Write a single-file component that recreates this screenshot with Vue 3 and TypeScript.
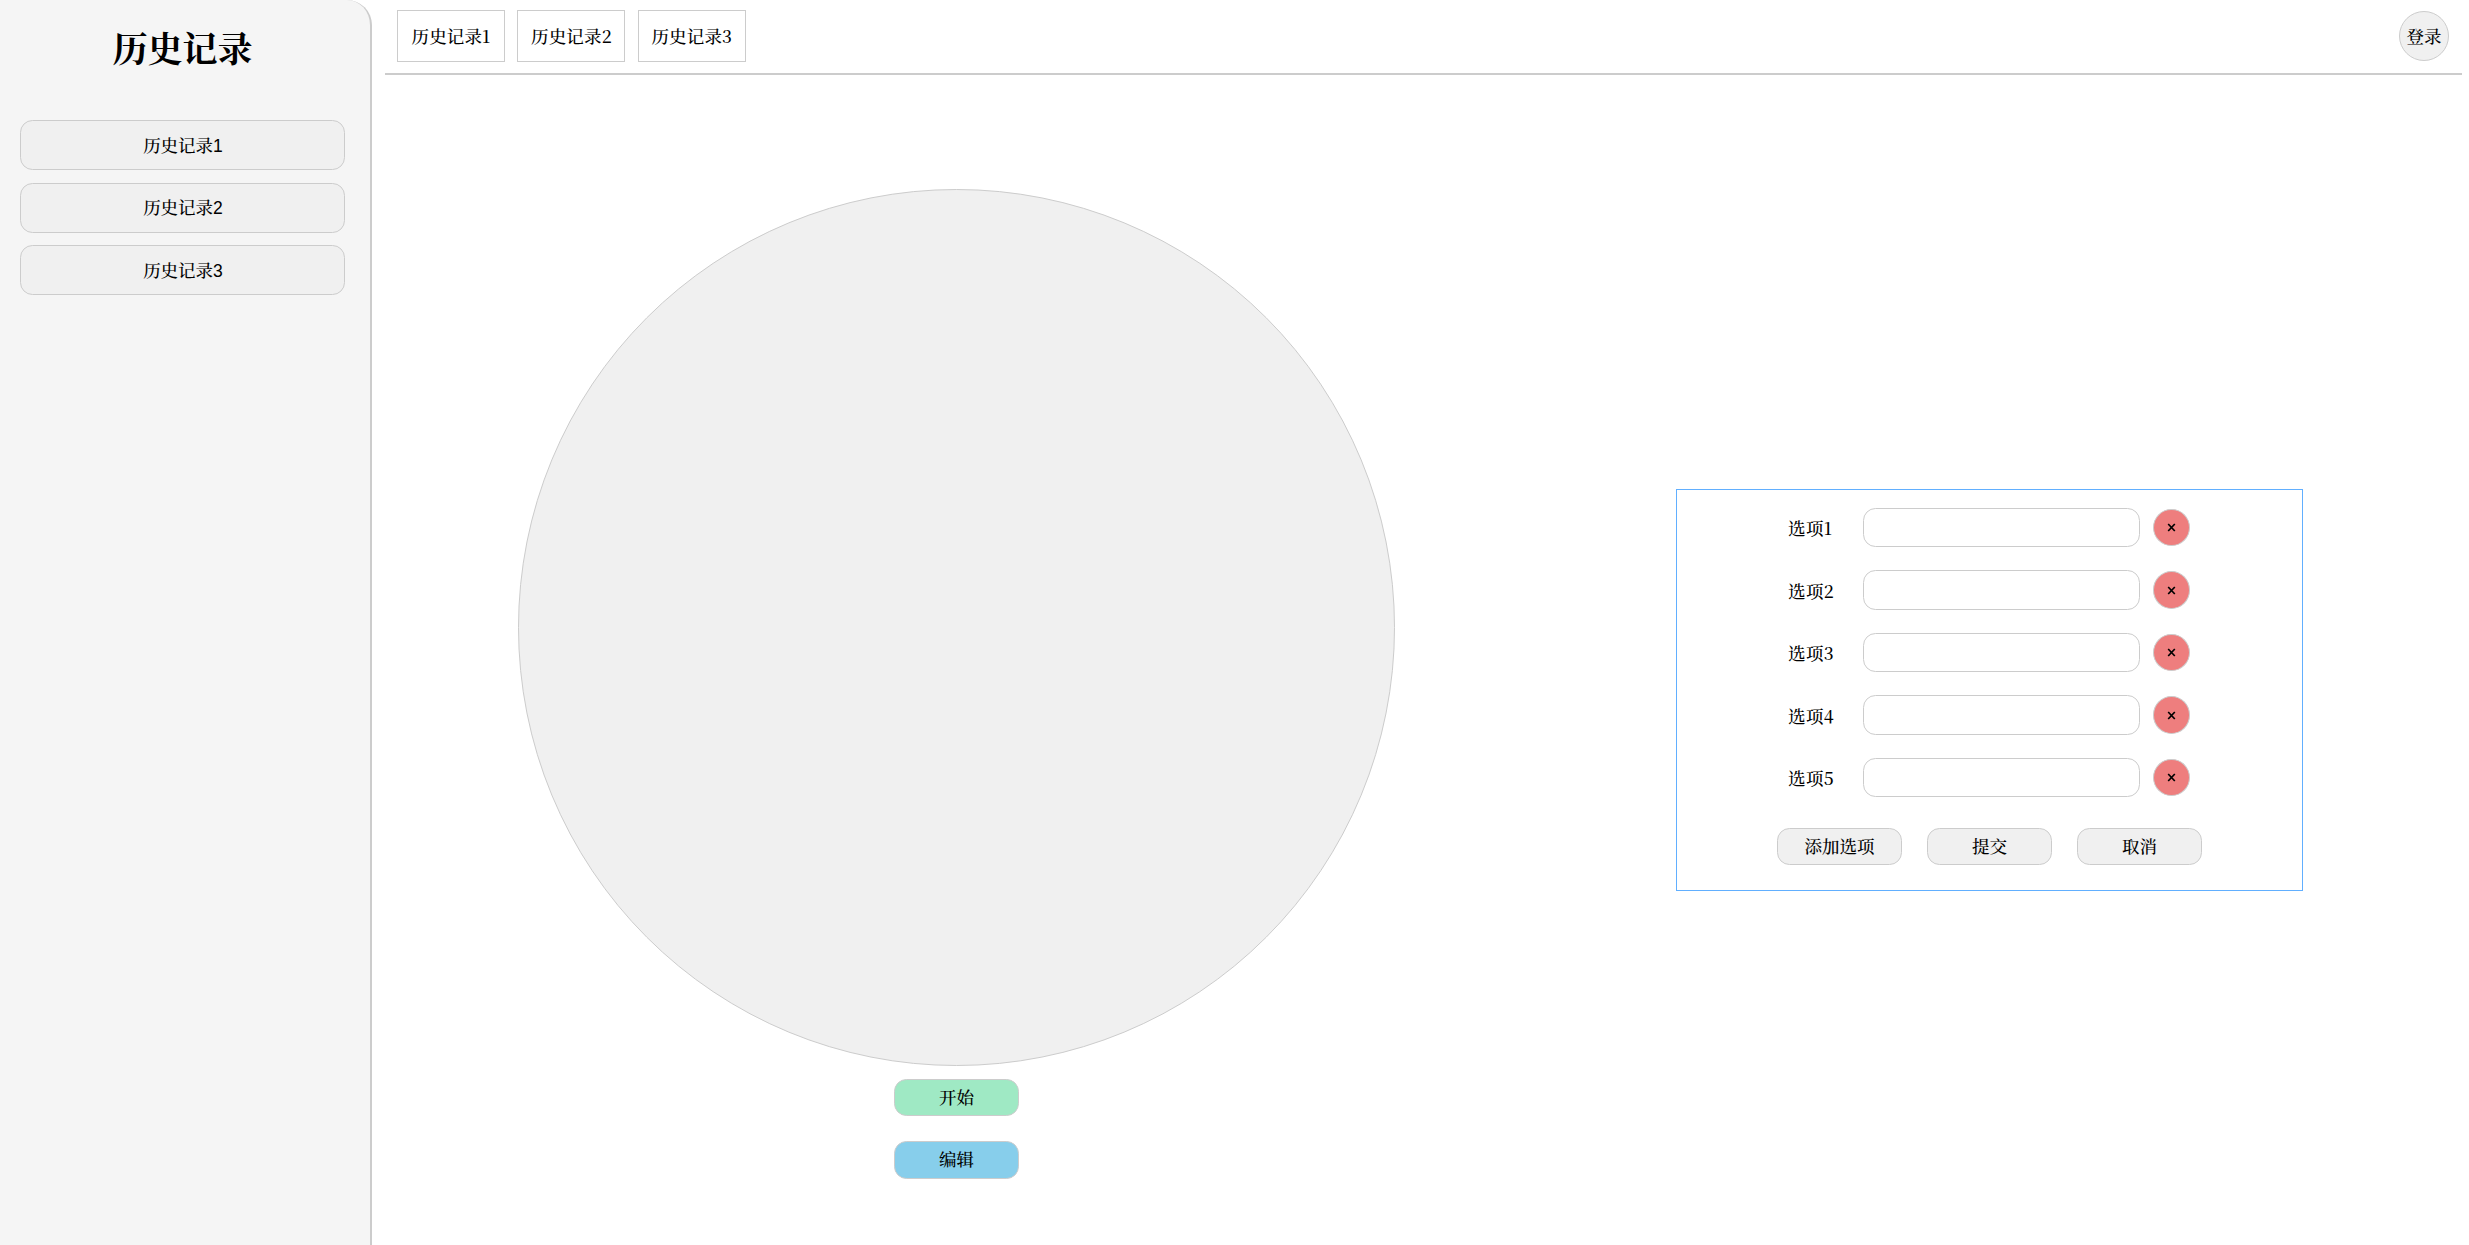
<script setup lang="ts">
import { ref } from 'vue'

const records = ref<string[]>(['历史记录1', '历史记录2', '历史记录3'])
const options = ref<{ id: number; value: string }[]>(
  [1, 2, 3, 4, 5].map((id) => ({ id, value: '' })),
)

function addOption() {
  options.value.push({ id: options.value.length + 1, value: '' })
}

function removeOption(index: number) {
  options.value.splice(index, 1)
}
</script>

<template>
  <div class="page">
    <aside class="sidebar">
      <h1 class="title">历史记录</h1>
      <button v-for="record in records" :key="record" class="btn record">{{ record }}</button>
    </aside>
    <div class="content">
      <header class="topbar">
        <nav class="tabs">
          <div v-for="record in records" :key="record" class="tab">{{ record }}</div>
        </nav>
        <button class="btn login">登录</button>
      </header>
      <main class="main">
        <section class="wheel-area">
          <div class="wheel"></div>
          <button class="btn action start">开始</button>
          <button class="btn action edit">编辑</button>
        </section>
        <section class="panel">
          <div v-for="(option, index) in options" :key="option.id" class="option">
            <span class="label">选项{{ index + 1 }}</span>
            <input v-model="option.value" class="field" type="text" />
            <button class="btn remove" @click="removeOption(index)">
              <svg width="9" height="9" viewBox="0 0 9 9">
                <path d="M1.2 1 L7.8 8 M7.8 1 L1.2 8" stroke="#000" stroke-width="1.7" />
              </svg>
            </button>
          </div>
          <div class="panel-actions">
            <button class="btn action" @click="addOption">添加选项</button>
            <button class="btn action">提交</button>
            <button class="btn action">取消</button>
          </div>
        </section>
      </main>
    </div>
  </div>
</template>

<style>
body {
  margin: 0;
  background: #fff;
}
</style>

<style scoped>
.page {
  display: flex;
  width: 100%;
  height: 1245px;
  overflow: hidden;
  color: #000;
  font-family: 'Noto Serif CJK SC', 'Liberation Serif', 'Noto Sans CJK SC', serif;
  font-size: 17.5px;
  font-weight: 500;
}
.page * {
  box-sizing: border-box;
}
.sidebar {
  display: flex;
  flex-direction: column;
  flex: none;
  width: 372px;
  padding: 0 25px 0 20px;
  border-right: 2px solid #ccc;
  border-top-right-radius: 25px;
  background: #f5f5f5;
}
.title {
  height: 96px;
  margin: 0 0 24px;
  font-size: 35px;
  font-weight: 700;
  line-height: 94px;
  text-align: center;
}
.btn {
  display: flex;
  align-items: center;
  justify-content: center;
  padding: 1px 0 0;
  border: 1px solid #ccc;
  border-radius: 12.5px;
  background: #f0f0f0;
  color: #000;
  font-family: 'Liberation Sans', 'Noto Serif CJK SC', 'Noto Sans CJK SC', sans-serif;
  font-size: 17.5px;
  font-weight: 500;
  line-height: 26px;
}
.record {
  flex: none;
  height: 50px;
  margin-bottom: 12.5px;
  padding-left: 1px;
}
.content {
  display: flex;
  flex: 1;
  flex-direction: column;
  padding: 0 7px 0 13px;
}
.topbar {
  display: flex;
  flex: none;
  justify-content: space-between;
  height: 75px;
  padding: 10px 13px 0 12px;
  border-bottom: 2px solid #ccc;
}
.tabs {
  display: flex;
  gap: 12.4px;
}
.tab {
  width: 108px;
  height: 52px;
  border: 1px solid #ccc;
  letter-spacing: 0.15px;
  line-height: 50px;
  text-align: center;
}
.login {
  width: 50px;
  height: 50px;
  margin-top: 1px;
  border-radius: 50%;
}
.main {
  display: flex;
  flex: 1;
}
.wheel-area {
  display: flex;
  flex-direction: column;
  align-items: center;
  width: 877px;
  margin-left: 133px;
  padding-top: 114px;
}
.wheel {
  flex: none;
  width: 877px;
  height: 877px;
  border: 1px solid #ccc;
  border-radius: 50%;
  background: #f0f0f0;
}
.action {
  flex: none;
  width: 125px;
  height: 37.5px;
}
.start {
  margin-top: 12.5px;
  background: #9fe9c4;
}
.edit {
  margin-top: 25px;
  background: #87ceeb;
}
.panel {
  width: 627px;
  height: 402px;
  margin: 414px 0 0 281px;
  padding-top: 6.28px;
  border: 1px solid #61afff;
}
.option {
  display: flex;
  align-items: center;
  height: 62.5px;
  padding-left: 111px;
}
.label {
  width: 75px;
  letter-spacing: 0.4px;
}
.field {
  width: 277px;
  height: 39.25px;
  padding: 0 12px;
  border: 1px solid #ccc;
  border-radius: 12.5px;
  background: #fff;
  font-size: 17.5px;
  outline: none;
}
.remove {
  width: 37px;
  height: 37.5px;
  margin-left: 13px;
  padding: 0;
  border-radius: 50%;
  background: #ee7e7e;
}
.panel-actions {
  display: flex;
  justify-content: center;
  gap: 25px;
  margin-top: 19.2px;
}
</style>
